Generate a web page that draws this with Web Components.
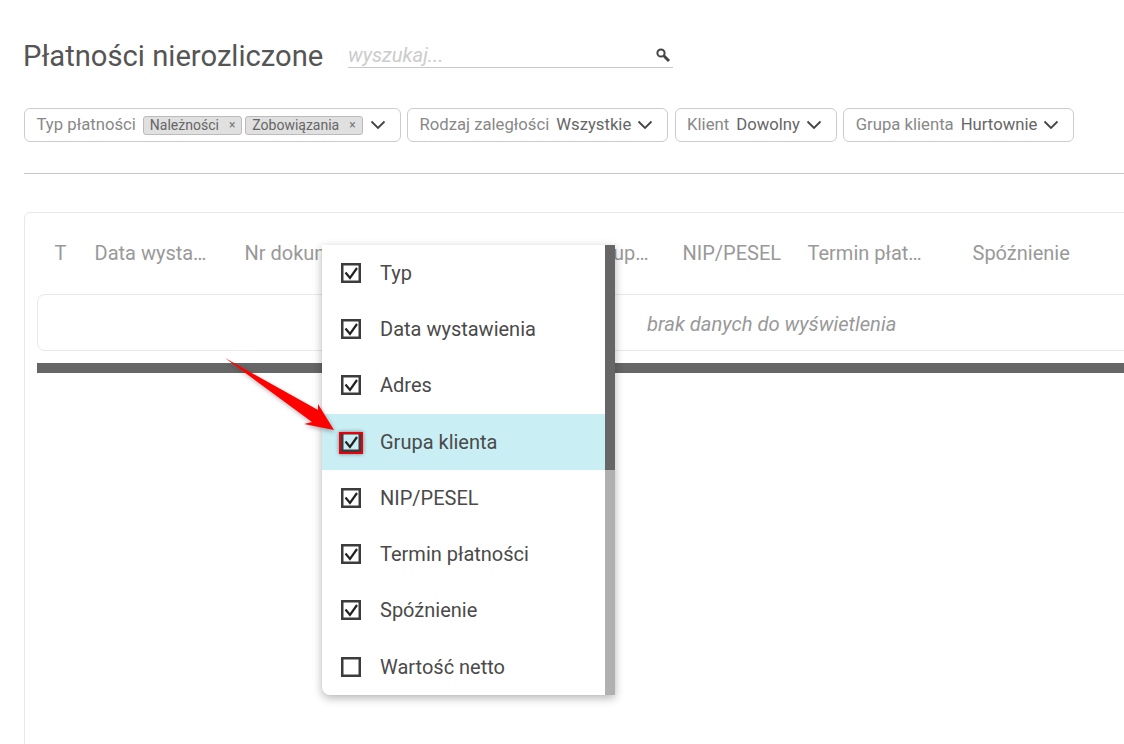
<!DOCTYPE html>
<html lang="pl">
<head>
<meta charset="utf-8">
<title>Płatności nierozliczone</title>
<style>
  html, body { margin: 0; padding: 0; background: #fff; overflow: hidden; height: 744px; }
  body { font-family: Roboto, "Liberation Sans", sans-serif; }
</style>
</head>
<body>
<payments-page>
  <page-header slot="top" title-text="Płatności nierozliczone" placeholder="wyszukaj..."></page-header>
  <filter-bar slot="filters">
    <filter-select label="Typ płatności" chips>
      <filter-chip>Należności</filter-chip>
      <filter-chip>Zobowiązania</filter-chip>
    </filter-select>
    <filter-select label="Rodzaj zaległości">Wszystkie</filter-select>
    <filter-select label="Klient">Dowolny</filter-select>
    <filter-select label="Grupa klienta">Hurtownie</filter-select>
  </filter-bar>
  <data-card slot="card"></data-card>
  <column-menu slot="overlay">
    <menu-item checked>Typ</menu-item>
    <menu-item checked>Data wystawienia</menu-item>
    <menu-item checked style="padding-bottom:1px">Adres</menu-item>
    <menu-item checked active>Grupa klienta</menu-item>
    <menu-item checked>NIP/PESEL</menu-item>
    <menu-item checked>Termin płatności</menu-item>
    <menu-item checked style="padding-bottom:1px">Spóźnienie</menu-item>
    <menu-item>Wartość netto</menu-item>
  </column-menu>
  <red-arrow slot="overlay"></red-arrow>
</payments-page>

<script>
class PaymentsPage extends HTMLElement {
  constructor() {
    super();
    this.attachShadow({mode: 'open'}).innerHTML = `
    <style>
      :host { display: block; position: relative; width: 1124px; height: 744px; overflow: hidden; padding: 0 0 0 24px; box-sizing: border-box; }
      .top { height: 108px; }
      .filters { height: 34px; }
      hr { border: 0; height: 1px; background: #c8c8c8; margin: 31px 0 38px; }
    </style>
    <div class="top"><slot name="top"></slot></div>
    <div class="filters"><slot name="filters"></slot></div>
    <hr>
    <slot name="card"></slot>
    <slot name="overlay"></slot>`;
  }
}

class PageHeader extends HTMLElement {
  constructor() {
    super();
    this.attachShadow({mode: 'open'});
  }
  connectedCallback() {
    this.shadowRoot.innerHTML = `
    <style>
      :host { display: flex; align-items: flex-start; padding-top: 39px; }
      h1 { margin: 0 0 0 -1px; font: 400 29.2px/34px Roboto, sans-serif; color: #555; width: 325px; white-space: nowrap; }
      .search { width: 325px; height: 29px; padding-top: 4px; border-bottom: 1px solid #c8c8c8; display: flex; align-items: center; justify-content: space-between; box-sizing: border-box; }
      .ph { font: italic 400 20.2px/24px Roboto, sans-serif; color: #ccc; }
      svg { margin-right: 2px; }
    </style>
    <h1>${this.getAttribute('title-text')}</h1>
    <div class="search">
      <span class="ph">${this.getAttribute('placeholder')}</span>
      <svg width="16" height="16" viewBox="0 0 16 16" fill="none" stroke="#444">
        <circle cx="6" cy="6" r="3.6" stroke-width="2"/>
        <path d="M8.8 8.8 L14 14" stroke-width="3"/>
      </svg>
    </div>`;
  }
}

class FilterBar extends HTMLElement {
  constructor() {
    super();
    this.attachShadow({mode: 'open'}).innerHTML = `
    <style>
      :host { display: flex; gap: 6.3px; }
    </style>
    <slot></slot>`;
  }
}

class FilterSelect extends HTMLElement {
  constructor() {
    super();
    this.attachShadow({mode: 'open'});
  }
  connectedCallback() {
    this.shadowRoot.innerHTML = `
    <style>
      :host { display: flex; align-items: center; box-sizing: border-box; height: 34px; border: 1px solid #ccc; border-radius: 6px; padding: 0 14px 0 11.5px; font: 400 16.7px/20px Roboto, sans-serif; color: #666; white-space: nowrap; }
      .label { color: #888; margin-right: 7px; }
      .value { display: flex; gap: 3px; }
      svg { flex: none; margin-left: 6px; }
      :host([chips]) svg { margin-left: 7px; }
    </style>
    <span class="label">${this.getAttribute('label')}</span>
    <span class="value"><slot></slot></span>
    <svg width="16" height="10" viewBox="0 0 16 10" fill="none" stroke="#444" stroke-width="1.8"><path d="M1.5 1.5 L8 8 L14.5 1.5"/></svg>`;
  }
}

class FilterChip extends HTMLElement {
  constructor() {
    super();
    this.attachShadow({mode: 'open'}).innerHTML = `
    <style>
      :host { display: inline-flex; align-items: center; box-sizing: border-box; height: 19px; margin-top: 1px; padding: 0 6px 0 6px; gap: 10px; background: #e0e0e0; border: 1px solid #bbb; border-radius: 3px; font: 400 14px/17px Roboto, sans-serif; color: #666; }
      .x { font-size: 12px; color: #777; }
    </style>
    <slot></slot><span class="x">×</span>`;
  }
}

class DataCard extends HTMLElement {
  constructor() {
    super();
    const cols = [['T', 40], ['Data wysta…', 150], ['Nr dokumentu', 190], ['Adres', 158], ['Grup…', 90], ['NIP/PESEL', 125], ['Termin płat…', 165], ['Spóźnienie', 120]];
    this.attachShadow({mode: 'open'}).innerHTML = `
    <style>
      :host { display: block; box-sizing: border-box; width: 1160px; height: 600px; border: 1px solid #e8e8e8; border-radius: 6px; padding: 0 0 0 12px; }
      .head { display: flex; box-sizing: border-box; height: 81px; padding: 0 0 2px 17.5px; align-items: center; font: 400 20px/24px Roboto, sans-serif; color: #999; white-space: nowrap; }
      .row { box-sizing: border-box; height: 57px; padding: 3px 0 0 609px; border: 1px solid #e8e8e8; border-radius: 8px; display: flex; align-items: center; font: italic 400 20.2px/24px Roboto, sans-serif; color: #999; }
      .bar { height: 10px; background: #666; margin-top: 12px; }
    </style>
    <div class="head">${cols.map(c => `<span style="width:${c[1]}px;flex:none">${c[0]}</span>`).join('')}</div>
    <div class="row">brak danych do wyświetlenia</div>
    <div class="bar"></div>`;
  }
}

class ColumnMenu extends HTMLElement {
  constructor() {
    super();
    this.attachShadow({mode: 'open'}).innerHTML = `
    <style>
      :host { position: absolute; left: 322px; top: 245px; width: 293px; height: 450px; background: #fff; border-radius: 0 0 0 8px; box-shadow: 0 3px 10px rgba(0,0,0,.3); display: flex; }
      .list { flex: 1; display: grid; grid-template-rows: 56px 56px 57px 56px 56px 56px 57px 56px; }
      .track { width: 10px; background: linear-gradient(#666 0 225px, #b0b0b0 225px); }
    </style>
    <div class="list"><slot></slot></div>
    <div class="track"></div>`;
  }
}

class MenuItem extends HTMLElement {
  constructor() {
    super();
    this.attachShadow({mode: 'open'});
  }
  connectedCallback() {
    const check = this.hasAttribute('checked')
      ? '<path d="M4.5 9.5 L9 15 L16 5" fill="none" stroke="#222" stroke-width="2.2"/>' : '';
    this.shadowRoot.innerHTML = `
    <style>
      :host { display: flex; align-items: center; gap: 19px; padding-left: 19px; font: 400 20px/24px Roboto, sans-serif; color: #4a4a4a; white-space: nowrap; }
      :host([active]) { background: #c9eef4; }
      .box { position: relative; width: 20px; height: 20px; flex: none; }
      svg { display: block; }
      .mark { display: none; position: absolute; left: -2px; top: 0; width: 20px; height: 18px; border: 2px solid #e8000b; box-shadow: 0 0 4px rgba(0,0,0,.45); }
      :host([active]) .mark { display: block; }
    </style>
    <span class="box">
      <svg width="20" height="20" viewBox="0 0 20 20"><rect x="1.25" y="1.25" width="17.5" height="17.5" fill="none" stroke="#3c3c3c" stroke-width="2.5"/>${check}</svg>
      <span class="mark"></span>
    </span>
    <slot></slot>`;
  }
}

class RedArrow extends HTMLElement {
  constructor() {
    super();
    this.attachShadow({mode: 'open'}).innerHTML = `
    <style>
      :host { position: absolute; left: 0; top: 0; width: 400px; height: 460px; pointer-events: none; }
      svg { display: block; filter: drop-shadow(1px 2px 2px rgba(0,0,0,.3)); }
    </style>
    <svg width="400" height="460" viewBox="0 0 400 460"><polygon fill="#f00" points="225,358 318,410 318,404 334,430 304,424 312,422"/></svg>`;
  }
}

customElements.define('payments-page', PaymentsPage);
customElements.define('page-header', PageHeader);
customElements.define('filter-bar', FilterBar);
customElements.define('filter-select', FilterSelect);
customElements.define('filter-chip', FilterChip);
customElements.define('data-card', DataCard);
customElements.define('column-menu', ColumnMenu);
customElements.define('menu-item', MenuItem);
customElements.define('red-arrow', RedArrow);
</script>
</body>
</html>
